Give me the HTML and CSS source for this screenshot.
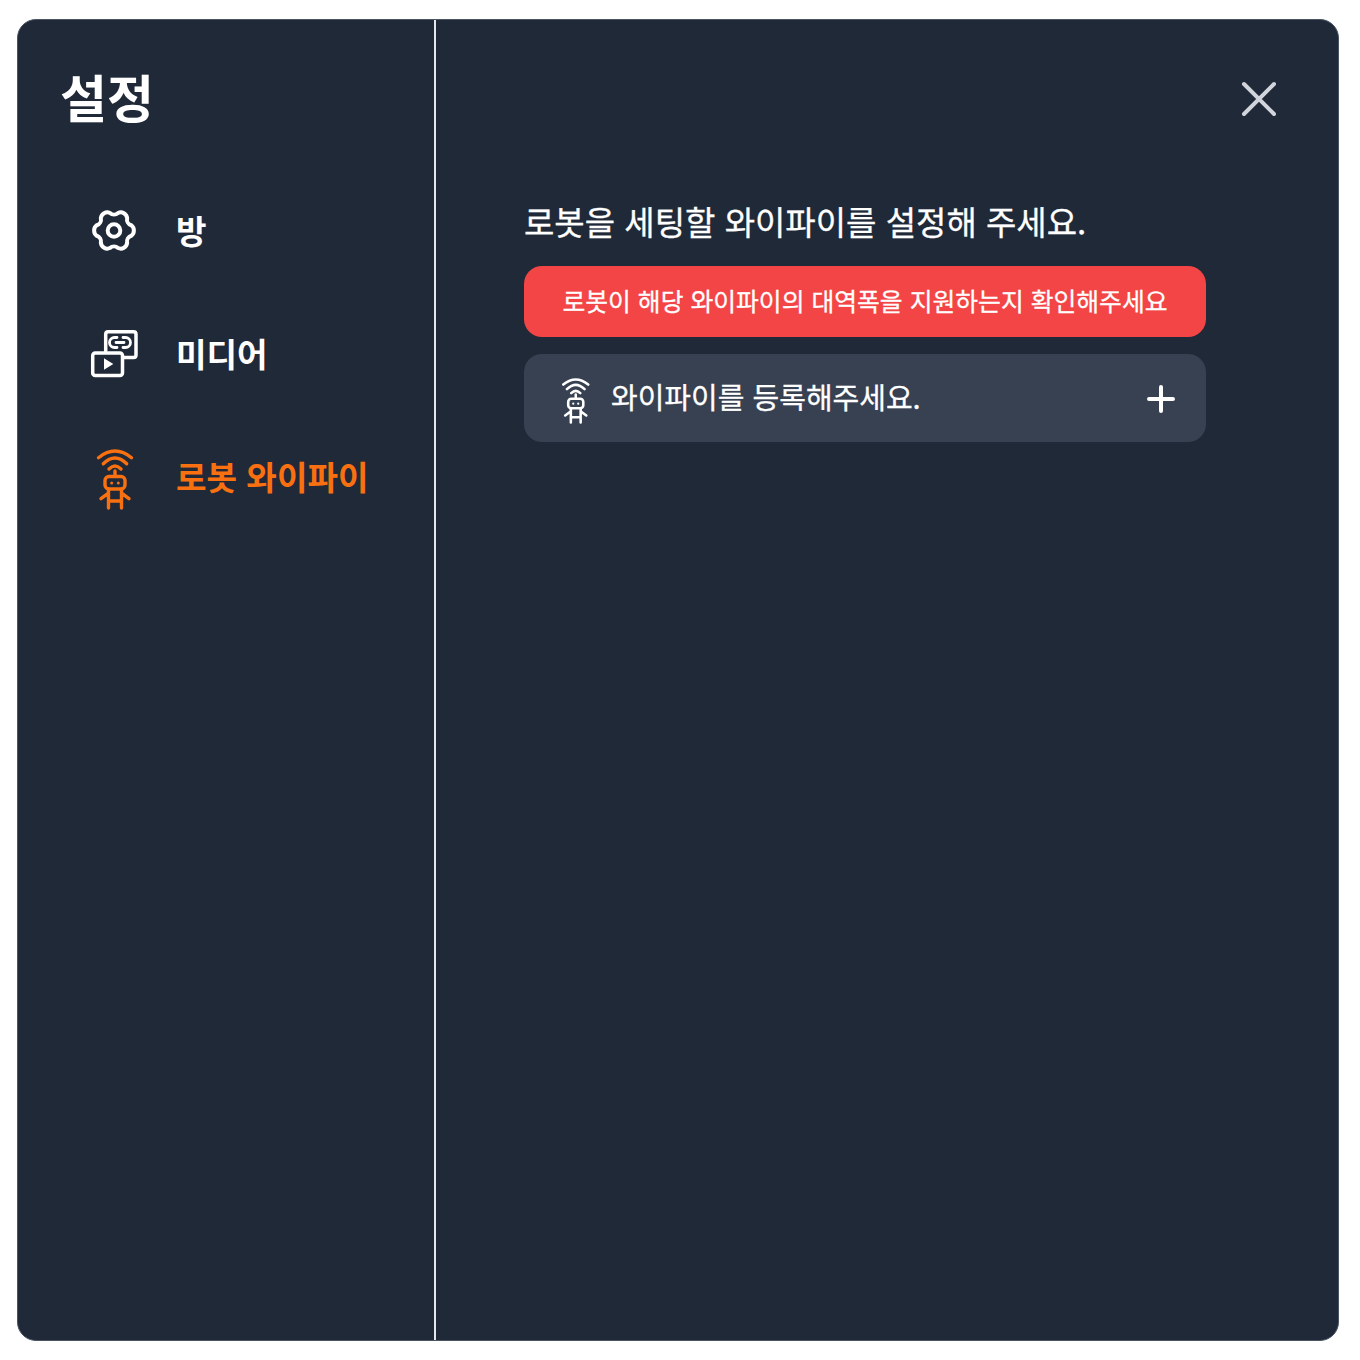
FILE: index.html
```html
<!DOCTYPE html>
<html lang="ko">
<head>
    <meta charset="UTF-8">
    <meta name="viewport" content="width=device-width, initial-scale=1.0">
    <title>설정</title>
    <link rel="stylesheet" href="styles.css">
</head>
<body>
    <div class="modal">
        <aside class="sidebar">
            <h1 class="sidebar-title">설정</h1>
            <nav class="menu">
                <div class="menu-item">
                    <svg class="menu-icon" viewBox="-8 -9.5 60 60" fill="none" stroke="currentColor" stroke-width="4" stroke-linejoin="round">
                        <path d="M39.2 27.26A6.5 6.5 0 0 0 39.2 16.74A6 6 0 0 1 35.16 9.72A6.5 6.5 0 0 0 26.05 4.46A6 6 0 0 1 17.95 4.46A6.5 6.5 0 0 0 8.84 9.72A6 6 0 0 1 4.79 16.74A6.5 6.5 0 0 0 4.79 27.26A6 6 0 0 1 8.84 34.28A6.5 6.5 0 0 0 17.95 39.54A6 6 0 0 1 26.05 39.54A6.5 6.5 0 0 0 35.16 34.28A6 6 0 0 1 39.2 27.26Z"/>
                        <circle cx="22" cy="22" r="6.3"/>
                    </svg>
                    <span>방</span>
                </div>
                <div class="menu-item">
                    <svg class="menu-icon" viewBox="0 0 60 60" fill="none" stroke="currentColor" stroke-width="3.5" stroke-linejoin="round" stroke-linecap="round">
                        <path d="M21.7 29V12.2Q21.7 9.7 24.2 9.7H49.5Q52 9.7 52 12.2V33Q52 35.5 49.5 35.5H40"/>
                        <rect x="8.7" y="31" width="29.8" height="22.5" rx="2.5"/>
                        <path d="M20 36.3L29.3 42L20 47.7Z" fill="currentColor" stroke="none"/>
                        <path d="M33 15.5H30.5A5 5 0 0 0 30.5 25.5H33M39 15.5H41.5A5 5 0 0 1 41.5 25.5H39M32 20.5H40" stroke-width="2.8"/>
                    </svg>
                    <span>미디어</span>
                </div>
                <div class="menu-item active">
                    <svg class="menu-icon" viewBox="-13 -5 60 60" fill="none" stroke="currentColor" stroke-width="3.4" stroke-linecap="round" stroke-linejoin="round">
                        <path d="M1.5 7.7Q18 -5.7 34.5 7.7M6.3 13.7Q18 2.3 29.7 13.7M12 19Q18 13 24 19M18 21V25"/>
                        <rect x="8" y="26.5" width="20" height="12.5" rx="4"/>
                        <circle cx="14.7" cy="33" r="1.5" fill="currentColor" stroke="none"/>
                        <circle cx="21.3" cy="33" r="1.5" fill="currentColor" stroke="none"/>
                        <path d="M11.5 39V58M24.5 39V58M11.5 51H24.5M4 48.7L10.7 43.7M32 48.7L25.3 43.7"/>
                    </svg>
                    <span>로봇 와이파이</span>
                </div>
            </nav>
        </aside>
        <main class="content">
            <button class="close-btn" type="button">
                <svg viewBox="0 0 36 36" fill="none" stroke="currentColor" stroke-width="4" stroke-linecap="round">
                    <path d="M3 3L33 33M33 3L3 33"/>
                </svg>
            </button>
            <h2 class="content-title">로봇을 세팅할 와이파이를 설정해 주세요.</h2>
            <div class="alert">로봇이 해당 와이파이의 대역폭을 지원하는지 확인해주세요</div>
            <div class="wifi-row">
                <svg class="wifi-icon" viewBox="0 -1 36 61" fill="none" stroke="currentColor" stroke-width="3.4" stroke-linecap="round" stroke-linejoin="round">
                    <path d="M1.5 7.7Q18 -5.7 34.5 7.7M6.3 13.7Q18 2.3 29.7 13.7M12 19Q18 13 24 19M18 21V25"/>
                    <rect x="8" y="26.5" width="20" height="12.5" rx="4"/>
                    <circle cx="14.7" cy="33" r="1.5" fill="currentColor" stroke="none"/>
                    <circle cx="21.3" cy="33" r="1.5" fill="currentColor" stroke="none"/>
                    <path d="M11.5 39V58M24.5 39V58M11.5 51H24.5M4 48.7L10.7 43.7M32 48.7L25.3 43.7"/>
                </svg>
                <span class="wifi-text">와이파이를 등록해주세요.</span>
                <svg class="plus-icon" viewBox="0 0 28 28" fill="none" stroke="currentColor" stroke-width="4" stroke-linecap="round">
                    <path d="M14 2V26M2 14H26"/>
                </svg>
            </div>
        </main>
    </div>
</body>
</html>
```

FILE: styles.css
```css
* {
    box-sizing: border-box;
}
body {
    margin: 0;
    padding: 19px 21px 19px 17px;
    background-color: #ffffff;
    font-family: "Noto Sans CJK KR", "Noto Sans", sans-serif;
}
.modal {
    display: flex;
    width: 1322px;
    height: 1322px;
    background-color: #202938;
    border: 1px solid #4b5563;
    border-radius: 19px;
    color: #ffffff;
    overflow: hidden;
}
.sidebar {
    width: 418px;
    flex-shrink: 0;
    padding: 44px 0 0 42px;
    border-right: 2px solid #e5e7eb;
}
.sidebar-title {
    margin: 0;
    font-size: 51px;
    line-height: 64px;
    font-weight: 700;
}
.menu {
    display: flex;
    flex-direction: column;
    gap: 63px;
    margin-top: 71px;
    padding-left: 24px;
}
.menu-item {
    display: flex;
    align-items: center;
    gap: 32px;
    height: 60px;
    font-size: 33.2px;
    font-weight: 700;
}
.menu-item.active {
    color: #f97010;
}
.menu-icon {
    width: 60px;
    height: 60px;
    flex-shrink: 0;
    overflow: visible;
}
.content {
    position: relative;
    flex: 1;
    padding: 177px 0 0 88px;
}
.close-btn {
    position: absolute;
    top: 61px;
    right: 61.5px;
    width: 36px;
    height: 36px;
    padding: 0;
    background: none;
    border: none;
    color: #d1d5db;
}
.close-btn svg {
    display: block;
    width: 36px;
    height: 36px;
}
.content-title {
    margin: 0;
    font-size: 33px;
    line-height: 48px;
    font-weight: 400;
    -webkit-text-stroke: 0.3px #ffffff;
}
.alert {
    width: 682px;
    height: 71px;
    margin-top: 21px;
    background-color: #f34545;
    border-radius: 18px;
    font-size: 24.8px;
    line-height: 69px;
    font-weight: 400;
    -webkit-text-stroke: 0.3px #ffffff;
    text-align: center;
}
.wifi-row {
    display: flex;
    align-items: center;
    width: 682px;
    height: 88px;
    margin-top: 17px;
    padding: 0 31px 0 38px;
    background-color: #374151;
    border-radius: 18px;
}
.wifi-icon {
    width: 27.5px;
    height: 46px;
    margin-top: 5px;
    flex-shrink: 0;
}
.wifi-text {
    flex: 1;
    margin-left: 21.5px;
    padding-bottom: 4px;
    font-size: 29px;
    -webkit-text-stroke: 0.3px #ffffff;
}
.plus-icon {
    width: 28px;
    height: 28px;
    margin-top: 2px;
}
```
